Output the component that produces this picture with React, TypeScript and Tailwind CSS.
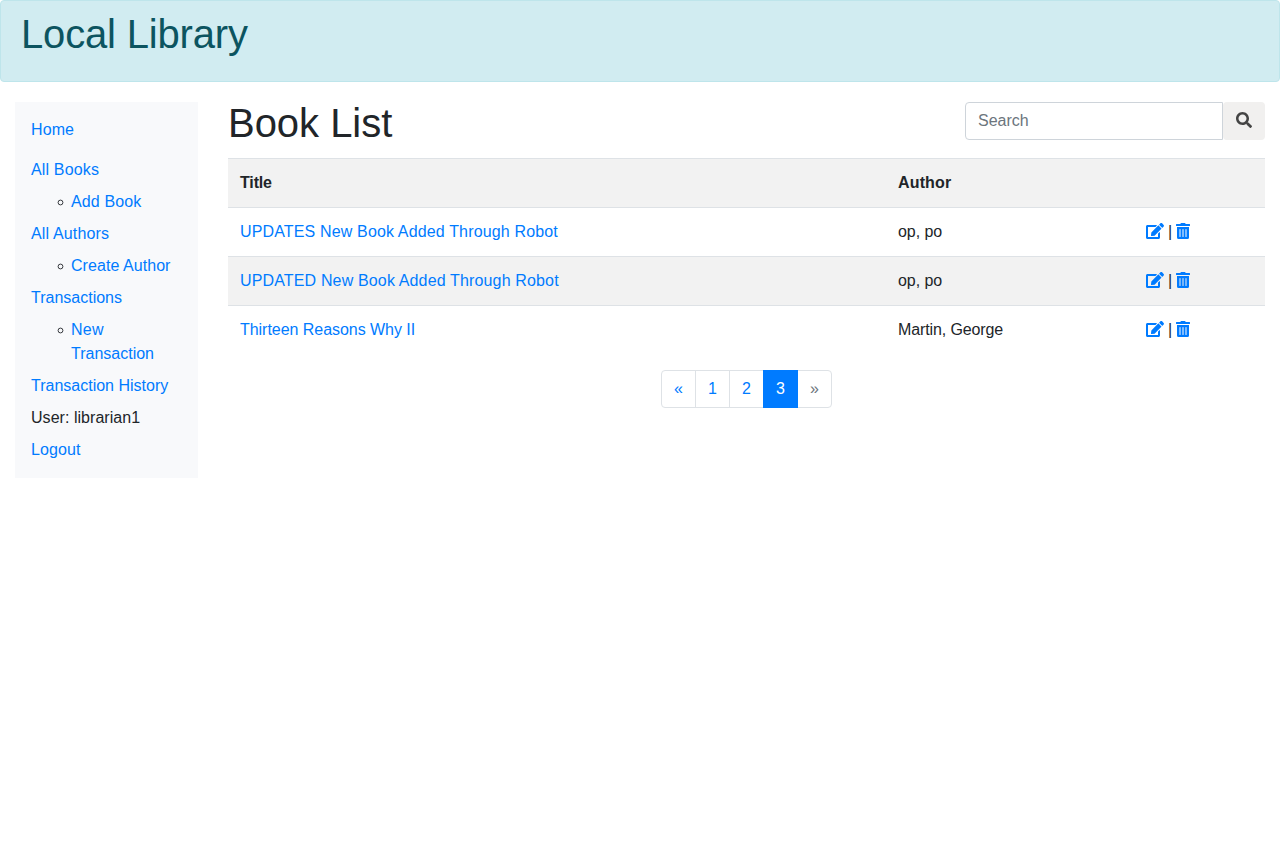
import React from "react";
import { FaEdit, FaSearch, FaTrashAlt } from "react-icons/fa";

const books = [
  { title: "UPDATES New Book Added Through Robot", author: "op, po", titleStyle: "tracking-[0.15px]", authorStyle: "tracking-[-0.05px]" },
  { title: "UPDATED New Book Added Through Robot", author: "op, po", titleStyle: "tracking-[0.15px]", authorStyle: "tracking-[-0.05px]" },
  {
    title: "Thirteen Reasons Why II",
    author: "Martin, George",
    titleStyle: "tracking-[-0.04px]",
    authorStyle: "tracking-[-0.12px]",
  },
];

function NavLink({ children, className = "" }: { children: React.ReactNode; className?: string }) {
  return (
    <a href="#" className={`text-[#007bff] ${className}`}>
      {children}
    </a>
  );
}

function SubNav({ children, className }: { children: React.ReactNode; className?: string }) {
  return (
    <ul>
      <li className="flex items-start pl-[26px]">
        <svg viewBox="0 0 7 7" className="mt-[9px] mr-[7px] h-[7px] w-[7px] shrink-0" aria-hidden="true">
          <circle cx="3.5" cy="3.5" r="2.4" fill="none" stroke="currentColor" strokeWidth="0.9" />
        </svg>
        <NavLink className={className}>{children}</NavLink>
      </li>
    </ul>
  );
}

function Sidebar() {
  return (
    <nav className="flex h-[376px] w-[183px] shrink-0 flex-col gap-2 bg-[#f8f9fb] p-4">
      <div className="mb-2">
        <NavLink className="tracking-[0.1px]">Home</NavLink>
      </div>
      <NavLink className="tracking-[0.15px]">All Books</NavLink>
      <SubNav className="tracking-[0.12px]">Add Book</SubNav>
      <NavLink className="tracking-[0.16px]">All Authors</NavLink>
      <SubNav className="tracking-[0.06px]">Create Author</SubNav>
      <NavLink>Transactions</NavLink>
      <SubNav>
        <span className="tracking-[0.3px]">New</span> Transaction
      </SubNav>
      <NavLink>Transaction History</NavLink>
      <span className="tracking-[0.04px]">User: librarian1</span>
      <NavLink className="tracking-[0.1px]">Logout</NavLink>
    </nav>
  );
}

function SearchBox() {
  return (
    <form className="flex h-[38px] w-[300px]">
      <input
        type="text"
        placeholder="Search"
        className="h-[38px] w-[258px] rounded-l-[4px] border border-[#ced4da] bg-white px-3 py-1.5 placeholder:text-[#6c757d]"
      />
      <button
        type="button"
        aria-label="Search"
        className="flex w-[42px] justify-center rounded-[4px] bg-[#f1f0ef] pt-[10px] text-[#444]"
      >
        <FaSearch size={16} />
      </button>
    </form>
  );
}

function BookTable() {
  return (
    <table className="mt-[18px] w-full table-fixed border-collapse text-left">
      <colgroup>
        <col className="w-[658px]" />
        <col className="w-[248px]" />
        <col className="w-[131px]" />
      </colgroup>
      <tbody>
        <tr className="h-[49px] border-t border-[#dee2e6] bg-[#f2f2f2]">
          <th className="p-3 font-bold tracking-[-0.15px]">Title</th>
          <th className="p-3 font-bold tracking-[0.15px]">Author</th>
          <th className="p-3" />
        </tr>
        {books.map((book) => (
          <tr key={book.title} className="h-[49px] border-t border-[#dee2e6] even:bg-white odd:bg-[#f2f2f2]">
            <td className="p-3">
              <NavLink className={book.titleStyle}>{book.title}</NavLink>
            </td>
            <td className="p-3">
              <span className={book.authorStyle}>{book.author}</span>
            </td>
            <td className="p-3">
              <div className="flex h-6 items-start">
                <a href="#" aria-label="Edit" className="pt-[3px] text-[#007bff]">
                  <FaEdit className="h-4 w-[18px]" />
                </a>
                <span className="w-3 text-center">|</span>
                <a href="#" aria-label="Delete" className="pt-[3px] text-[#007bff]">
                  <FaTrashAlt className="h-4 w-[14px]" />
                </a>
              </div>
            </td>
          </tr>
        ))}
      </tbody>
    </table>
  );
}

const pageItem =
  "-ml-px flex h-[38px] w-[35px] items-center justify-center border border-[#dee2e6] bg-white pl-px text-[#007bff]";

function Pagination() {
  return (
    <div className="mt-[15px] flex justify-center">
      <a href="#" className={`${pageItem} rounded-l-[4px]`}>«</a>
      <a href="#" className={pageItem}>1</a>
      <a href="#" className={pageItem}>2</a>
      <span className="z-10 -ml-px flex h-[38px] w-[35px] items-center justify-center border border-[#007bff] bg-[#007bff] pl-px text-white">
        3
      </span>
      <span className="-ml-px flex h-[38px] w-[35px] items-center justify-center rounded-r-[4px] border border-[#dee2e6] bg-white pl-px text-[#6c757d]">
        »
      </span>
    </div>
  );
}

export default function App() {
  return (
    <div className="min-h-screen bg-white font-['Liberation_Sans',Arial,sans-serif] text-base leading-6 text-[#212529]">
      <header className="mb-5 h-[82px] rounded-[4px] border border-[#bee5eb] bg-[#d1ecf1] px-5 pt-[9px] text-[#0c5460]">
        <h1 className="text-[40px] leading-[48px] tracking-[-0.17px]">Local Library</h1>
      </header>
      <div className="flex gap-[30px] px-[15px]">
        <Sidebar />
        <main className="min-w-0 flex-1">
          <div className="flex h-[38px] items-center justify-between">
            <h1 className="-my-2 pt-[4px] text-[40px] leading-[48px] tracking-[-0.03px]">Book List</h1>
            <SearchBox />
          </div>
          <BookTable />
          <Pagination />
        </main>
      </div>
    </div>
  );
}
